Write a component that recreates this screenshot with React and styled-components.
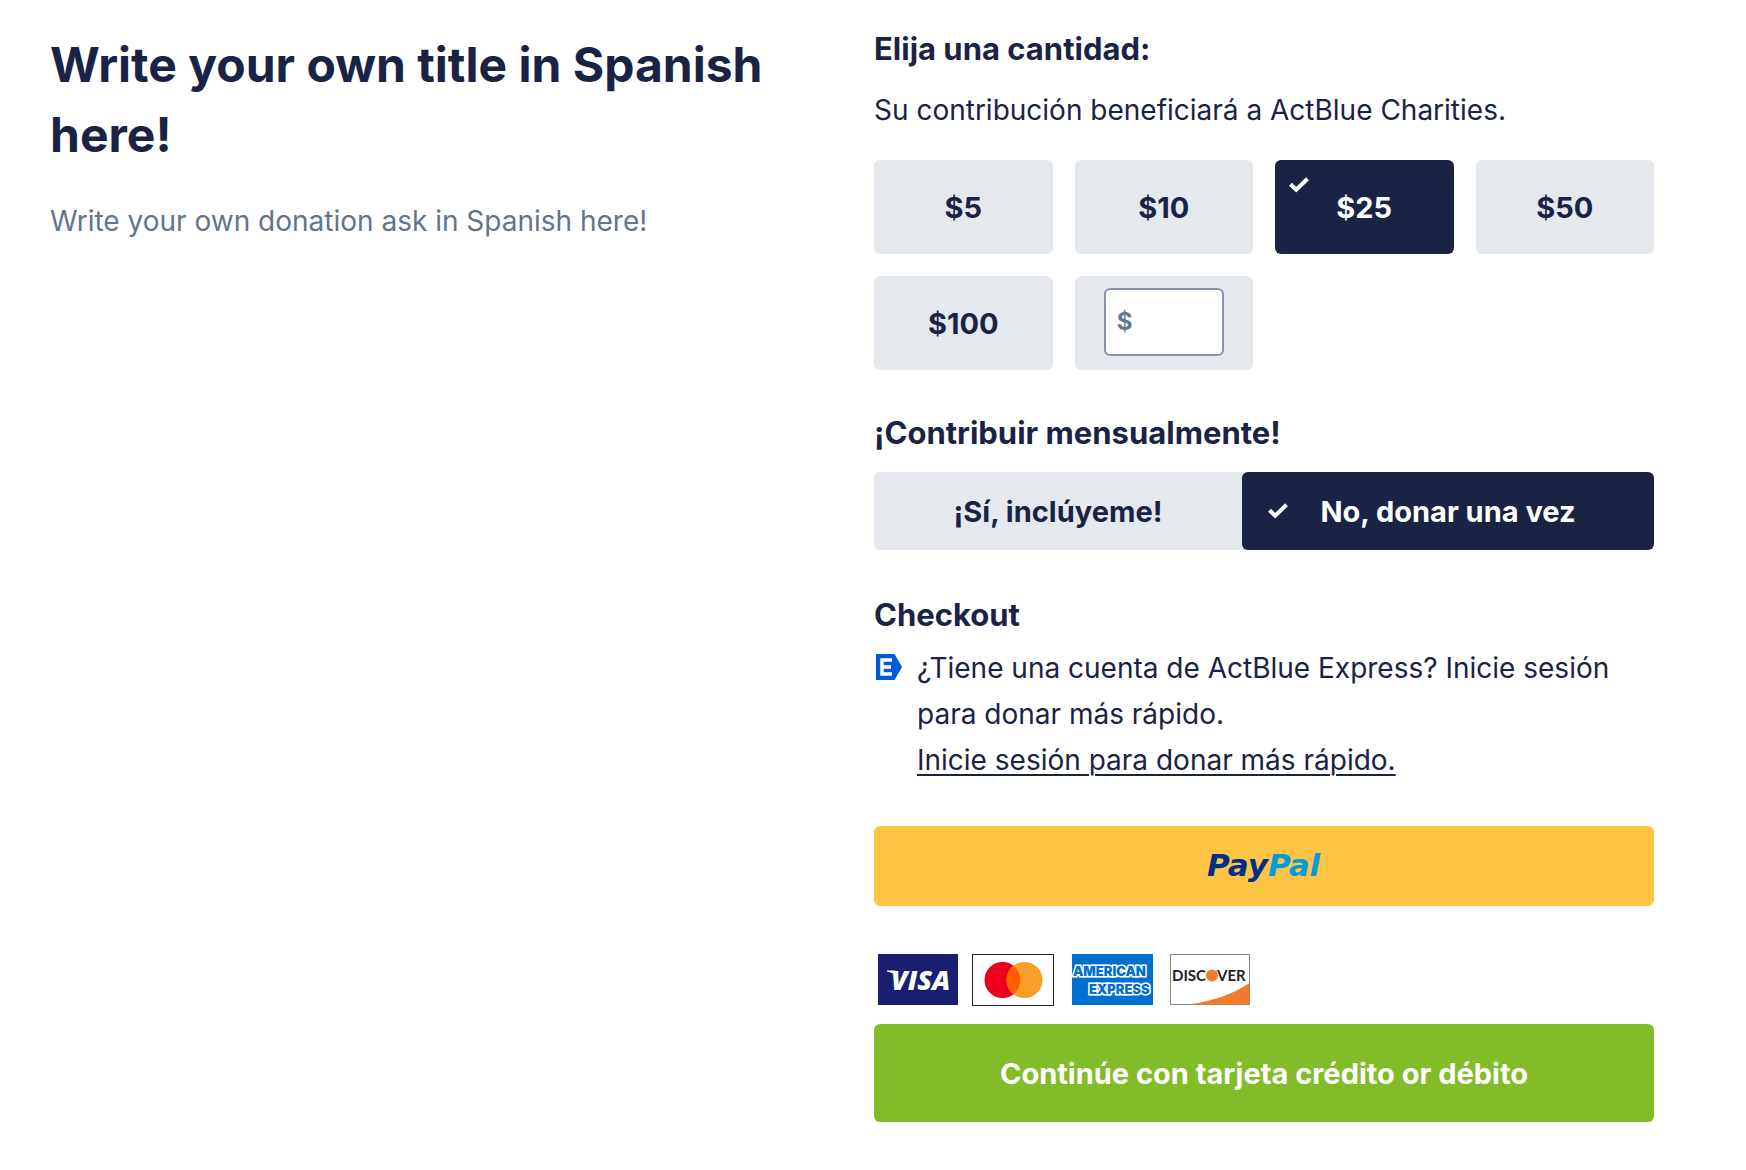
import { useState } from 'react'
import styled, { createGlobalStyle, css } from 'styled-components'

const navy = '#1a2343'
const mist = '#e5e9ed'

const GlobalStyle = createGlobalStyle`
    *, *::before, *::after {
        box-sizing: border-box;
    }

    body {
        margin: 0;
        background: #fff;
        color: ${navy};
        font-family: Inter, "Liberation Sans", sans-serif;
        font-size: 28px;
        line-height: 46px;
    }

    button, input {
        font: inherit;
        color: inherit;
    }
`;

const Page = styled.main`
    display: grid;
    grid-template-columns: minmax(0, 1fr) minmax(0, 1fr);
    column-gap: 44px;
    padding: 30px 92px 48px 50px;
`;

const Intro = styled.section``;

const Title = styled.h1`
    margin: 0 0 28px;
    font-size: 48px;
    font-weight: 700;
    line-height: 70px;
`;

const Ask = styled.p`
    margin: 0;
    color: #64748b;
`;

const Form = styled.form`
    display: flex;
    flex-direction: column;
`;

const Heading = styled.h2`
    margin: 0;
    font-size: 31px;
    font-weight: 700;
    line-height: 38px;
`;

const Beneficiary = styled.p`
    margin: 19px 0 27px;
`;

const AmountGrid = styled.div`
    display: grid;
    grid-template-columns: repeat(4, 1fr);
    gap: 22px;
    margin-bottom: 44px;
`;

const Radio = styled.input`
    position: absolute;
    inset: 0;
    margin: 0;
    opacity: 0;
    cursor: pointer;
`;

const option = css`
    position: relative;
    display: flex;
    align-items: center;
    justify-content: center;
    padding-top: 2px;
    border-radius: 6px;
    font-size: 29px;
    font-weight: 700;
    background: ${props => props.$selected ? navy : mist};
    color: ${props => props.$selected ? '#fff' : navy};
`;

const AmountOption = styled.label`
    ${option}
    height: 94px;
`;

const CustomAmount = styled.div`
    display: flex;
    justify-content: center;
    height: 94px;
    padding-top: 12px;
    border-radius: 6px;
    background: ${mist};
`;

const AmountInput = styled.input`
    width: 120px;
    height: 68px;
    padding: 0 11px 2px;
    border: 2px solid #8492aa;
    border-radius: 6px;
    background: #fff;
    font-size: 24px;
    font-weight: 700;

    &::placeholder {
        color: #66788a;
        opacity: 1;
    }
`;

const CornerCheck = styled.svg`
    position: absolute;
    top: 17px;
    left: 14px;
`;

const Frequency = styled.div`
    display: flex;
    margin: 20px 0 46px;
    border-radius: 6px;
    background: ${mist};
`;

const FrequencyOption = styled.label`
    ${option}
    flex: ${props => props.$selected ? '0 1 412px' : '1 1 0'};
    height: 78px;
`;

const SideCheck = styled.svg`
    position: absolute;
    top: 31px;
    left: 26px;
`;

const Express = styled.div`
    display: flex;
    gap: 15px;
    margin: 11px 0 43px;
    padding-left: 2px;

    p {
        margin: 0;
    }

    svg {
        flex: none;
        margin-top: 9px;
    }
`;

const SignIn = styled.a`
    color: inherit;
    text-decoration-thickness: 2px;
    text-underline-offset: 4px;
`;

const PayButton = styled.button`
    display: flex;
    align-items: center;
    justify-content: center;
    width: 100%;
    height: ${props => props.$tall ? '98px' : '80px'};
    padding: 2px 0 0;
    border: 0;
    border-radius: 6px;
    background: ${props => props.$bg};
    color: #fff;
    font-size: 29px;
    font-weight: 700;
    cursor: pointer;
`;

const Cards = styled.div`
    display: flex;
    gap: 14px;
    margin: 48px 0 18px;
    padding-left: 4px;
`;

const AMOUNTS = [5, 10, 25, 50, 100]

function Check({ as: Svg }) {
    return (
        <Svg width="20" height="16" viewBox="0 0 20 16" aria-hidden="true">
            <path d="M1.5 7.2 7.2 12.8 18.5 1.8" fill="none" stroke="currentColor" strokeWidth="4" />
        </Svg>
    )
}

function ExpressMark() {
    return (
        <svg width="26" height="26" viewBox="0 0 26 26" aria-hidden="true">
            <path d="M0 0H18.5L26 13 18.5 26H0Z" fill="#005ad6" />
            <path d="M16 6H6V20H16M6 13H15" fill="none" stroke="#fff" strokeWidth="3.4" />
        </svg>
    )
}

function PayPalMark() {
    return (
        <svg width="120" height="40" viewBox="0 0 120 40" role="img" aria-label="PayPal">
            <text x="3" y="29" fontFamily="DejaVu Sans, sans-serif" fontSize="31" fontWeight="700" fontStyle="italic" fill="#003087">
                Pay<tspan fill="#009cde">Pal</tspan>
            </text>
        </svg>
    )
}

function Visa() {
    return (
        <svg width="80" height="52" viewBox="0 0 80 52" role="img" aria-label="Visa">
            <rect width="80" height="51" fill="#1a1f71" />
            <path d="M9 16.5H17L19 22Q14 18 9 17.4Z" fill="#fff" />
            <text x="13" y="36" fontFamily="Open Sans, sans-serif" fontSize="27" fontWeight="800" fontStyle="italic" fill="#fff">VISA</text>
        </svg>
    )
}

function Mastercard() {
    return (
        <svg width="86" height="52" viewBox="0 0 86 52" role="img" aria-label="Mastercard">
            <rect x="0.5" y="0.5" width="81" height="51" fill="#fff" stroke="#222" />
            <circle cx="30.5" cy="26" r="18" fill="#eb001b" />
            <circle cx="52.5" cy="26" r="18" fill="#f79e2b" />
            <path d="M41.5 11.8a18 18 0 0 1 0 28.4a18 18 0 0 1 0-28.4Z" fill="#ff5f00" />
        </svg>
    )
}

function Amex() {
    return (
        <svg width="84" height="52" viewBox="0 0 84 52" role="img" aria-label="American Express">
            <rect width="81" height="51" fill="#016fd0" />
            <g fontFamily="Inter, sans-serif" fontSize="13" fontWeight="900" fill="#016fd0" stroke="#fff" strokeWidth="3" paintOrder="stroke">
                <text x="1" y="22">AMERICAN</text>
                <text x="17" y="40">EXPRESS</text>
            </g>
        </svg>
    )
}

function Discover() {
    return (
        <svg width="80" height="52" viewBox="0 0 80 52" role="img" aria-label="Discover">
            <rect x="0.5" y="0.5" width="79" height="50" fill="#fff" stroke="#888" />
            <path d="M18 50.5Q54 46 79.5 29V50.5Z" fill="#f27a2c" />
            <circle cx="42" cy="21.5" r="6" fill="#f27a2c" />
            <g fontFamily="Lato, sans-serif" fontSize="15" fontWeight="700" fill="#222">
                <text x="2" y="27">DISC</text>
                <text x="47" y="27">VER</text>
            </g>
        </svg>
    )
}

function App() {
    const [amount, setAmount] = useState(25)
    const [monthly, setMonthly] = useState(false)

    return (
        <>
            <GlobalStyle />
            <Page>
                <Intro>
                    <Title>Write your own title in Spanish here!</Title>
                    <Ask>Write your own donation ask in Spanish here!</Ask>
                </Intro>

                <Form onSubmit={e => e.preventDefault()}>
                    <Heading>Elija una cantidad:</Heading>
                    <Beneficiary>Su contribución beneficiará a ActBlue Charities.</Beneficiary>

                    <AmountGrid>
                        {AMOUNTS.map(value => (
                            <AmountOption key={value} $selected={amount === value}>
                                <Radio type="radio" name="amount" checked={amount === value} onChange={() => setAmount(value)} />
                                {amount === value && <Check as={CornerCheck} />}
                                <span>${value}</span>
                            </AmountOption>
                        ))}
                        <CustomAmount>
                            <AmountInput type="text" inputMode="decimal" placeholder="$" aria-label="Otra cantidad" />
                        </CustomAmount>
                    </AmountGrid>

                    <Heading>¡Contribuir mensualmente!</Heading>
                    <Frequency>
                        <FrequencyOption $selected={monthly}>
                            <Radio type="radio" name="frequency" checked={monthly} onChange={() => setMonthly(true)} />
                            {monthly && <Check as={SideCheck} />}
                            <span>¡Sí, inclúyeme!</span>
                        </FrequencyOption>
                        <FrequencyOption $selected={!monthly}>
                            <Radio type="radio" name="frequency" checked={!monthly} onChange={() => setMonthly(false)} />
                            {!monthly && <Check as={SideCheck} />}
                            <span>No, donar una vez</span>
                        </FrequencyOption>
                    </Frequency>

                    <Heading>Checkout</Heading>
                    <Express>
                        <ExpressMark />
                        <div>
                            <p>¿Tiene una cuenta de ActBlue Express? Inicie sesión para donar más rápido.</p>
                            <SignIn href="#signin">Inicie sesión para donar más rápido.</SignIn>
                        </div>
                    </Express>

                    <PayButton type="button" $bg="#ffc345">
                        <PayPalMark />
                    </PayButton>

                    <Cards>
                        <Visa />
                        <Mastercard />
                        <Amex />
                        <Discover />
                    </Cards>
                    <PayButton type="submit" $tall $bg="#82bc29">
                        Continúe con tarjeta crédito or débito
                    </PayButton>
                </Form>
            </Page>
        </>
    )
}

export default App;
